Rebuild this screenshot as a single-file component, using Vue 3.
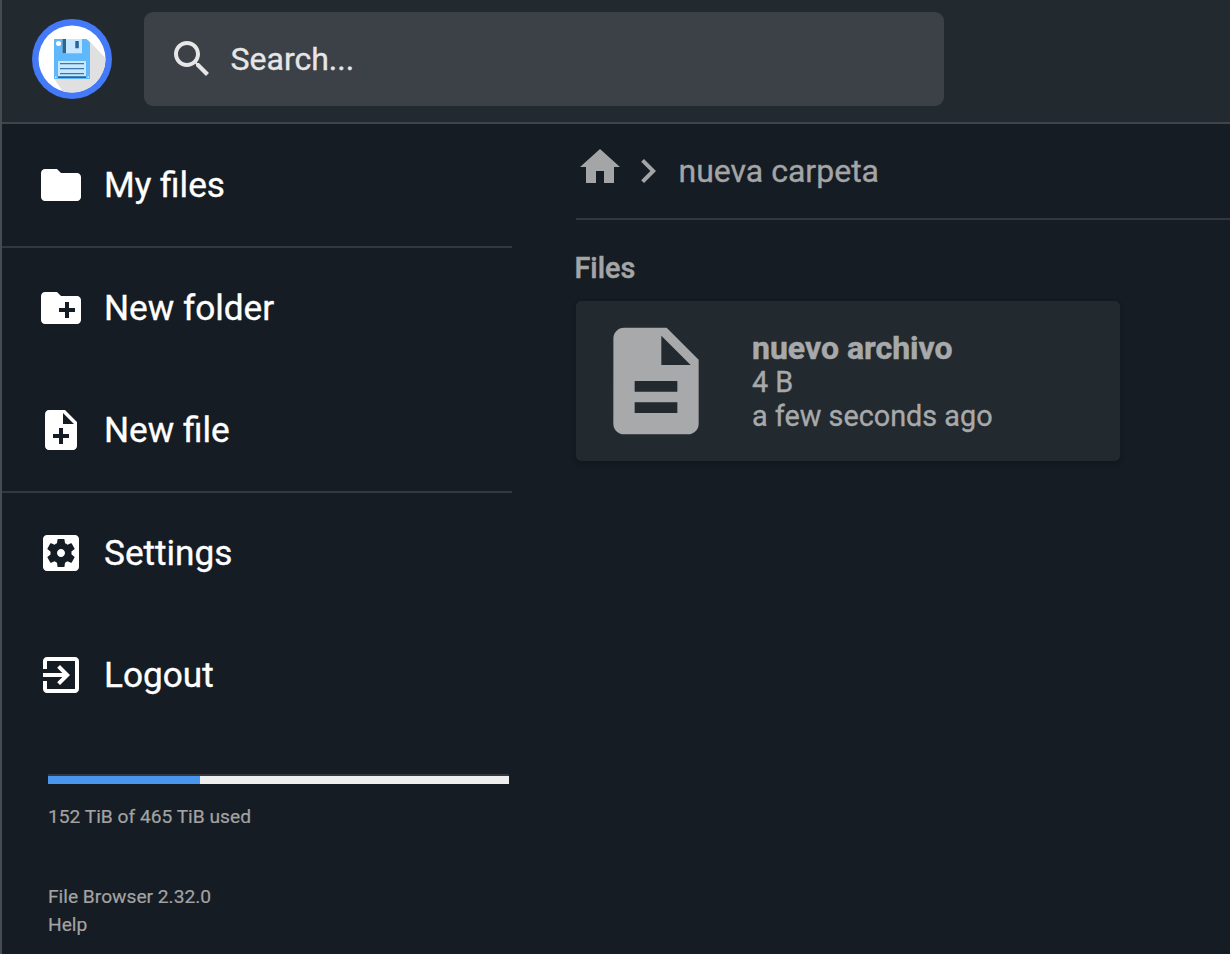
<script setup>
const folder = 'M10 4H4c-1.1 0-1.99.9-1.99 2L2 18c0 1.1.9 2 2 2h16c1.1 0 2-.9 2-2V8c0-1.1-.9-2-2-2h-8l-2-2z'
const groups = [
  [{ label: 'My files', path: folder }],
  [
    { label: 'New folder', path: 'M20 6h-8l-2-2H4c-1.11 0-1.99.89-1.99 2L2 18c0 1.11.89 2 2 2h16c1.11 0 2-.89 2-2V8c0-1.11-.89-2-2-2zm-1 8h-3v3h-2v-3h-3v-2h3V9h2v3h3v2z' },
    { label: 'New file', path: 'M14 2H6c-1.1 0-1.99.9-1.99 2L4 20c0 1.1.89 2 1.99 2H18c1.1 0 2-.9 2-2V8l-6-6zm2 14h-3v3h-2v-3H8v-2h3v-3h2v3h3v2zm-3-7V3.5L18.5 9H13z' },
  ],
  [
    { label: 'Settings', path: 'M12 10c-1.1 0-2 .9-2 2s.9 2 2 2 2-.9 2-2-.9-2-2-2zm7-7H5c-1.11 0-2 .9-2 2v14c0 1.1.89 2 2 2h14c1.11 0 2-.9 2-2V5c0-1.1-.89-2-2-2zm-1.75 9c0 .23-.02.46-.05.68l1.48 1.16c.13.11.17.3.08.45l-1.4 2.42c-.09.15-.27.21-.43.15l-1.74-.7c-.36.28-.76.51-1.18.69l-.26 1.85c-.03.17-.18.3-.35.3h-2.8c-.17 0-.32-.13-.35-.29l-.26-1.85c-.43-.18-.82-.41-1.18-.69l-1.74.7c-.16.06-.34 0-.43-.15l-1.4-2.42c-.09-.15-.05-.34.08-.45l1.48-1.16c-.03-.23-.05-.46-.05-.69s.02-.46.05-.68l-1.48-1.16c-.13-.11-.17-.3-.08-.45l1.4-2.42c.09-.15.27-.21.43-.15l1.74.7c.36-.28.76-.51 1.18-.69l.26-1.85c.03-.17.18-.3.35-.3h2.8c.17 0 .32.13.35.29l.26 1.85c.43.18.82.41 1.18.69l1.74-.7c.16-.06.34 0 .43.15l1.4 2.42c.09.15.05.34-.08.45l-1.48 1.16c.03.23.05.46.05.69z' },
    { label: 'Logout', path: 'M10.09 15.59L11.5 17l5-5-5-5-1.41 1.41L12.67 11H3v2h9.67l-2.58 2.59zM19 3H5c-1.11 0-2 .9-2 2v4h2V5h14v14H5v-4H3v4c0 1.1.89 2 2 2h14c1.1 0 2-.9 2-2V5c0-1.1-.9-2-2-2z' },
  ],
]
</script>

<template>
  <div class="page">
    <header>
      <svg class="logo" viewBox="0 0 80 80">
        <defs><clipPath id="disc"><circle cx="40" cy="40" r="33.5" /></clipPath></defs>
        <circle cx="40" cy="40" r="40" fill="#4479f8" />
        <circle cx="40" cy="40" r="33.5" fill="#fff" />
        <path clip-path="url(#disc)" d="M56 20.5L80 46V80H36L22 59.5z" fill="#e0e0e0" />
        <path d="M22 20H54.5L58 23.5V60H22z" fill="#5fb8fc" />
        <circle cx="26.5" cy="24.5" r="2.5" fill="#fff" />
        <path d="M30.5 20H50V34.3H30.5z" fill="#c6e7fd" />
        <path d="M30.5 20H34V34.3H30.5zM43.3 22H46.8V29.3H43.3z" fill="#2a6596" />
        <path d="M26 42H54V57.5H26z" fill="#c6e7fd" />
        <path d="M28 44H52V45.2H28zM28 49H52V50.2H28zM28 54H52V55.2H28z" fill="#3f78a8" />
        <path d="M26 57.3H54V59H26z" fill="#2a6596" />
        <path d="M23 57.5h1.5V59H23zM55.5 57.5H57V59h-1.5z" fill="#c6e7fd" />
      </svg>
      <div class="search">
        <svg viewBox="0 0 24 24"><path d="M15.5 14h-.79l-.28-.27C15.41 12.59 16 11.11 16 9.5 16 5.91 13.09 3 9.5 3S3 5.91 3 9.5 5.91 16 9.5 16c1.61 0 3.09-.59 4.23-1.57l.27.28v.79l5 4.99L20.49 19l-4.99-5zm-6 0C7.01 14 5 11.99 5 9.5S7.01 5 9.5 5 14 7.01 14 9.5 11.99 14 9.5 14z" /></svg>
        <span>Search...</span>
      </div>
    </header>
    <div class="body">
      <nav>
        <div v-for="(g, i) in groups" :key="i" class="group">
          <div v-for="a in g" :key="a.label" class="action">
            <svg viewBox="0 0 24 24"><path :d="a.path" /></svg>
            <span>{{ a.label }}</span>
          </div>
        </div>
        <div class="usage">
          <div class="bar"><div class="fill"></div></div>
          <p>152 TiB of 465 TiB used</p>
        </div>
        <div class="credits">
          <div>File Browser 2.32.0</div>
          <div>Help</div>
        </div>
      </nav>
      <main>
        <div class="crumbs">
          <svg class="home" viewBox="0 0 24 24"><path d="M10 20v-6h4v6h5v-8h3L12 3 2 12h3v8z" /></svg>
          <svg class="chev" viewBox="0 0 24 24"><path d="M10 6L8.59 7.41 13.17 12l-4.58 4.59L10 18l6-6z" /></svg>
          <span>nueva carpeta</span>
        </div>
        <h2>Files</h2>
        <div class="card">
          <svg viewBox="0 0 24 24"><path d="M14 2H6c-1.1 0-1.99.9-1.99 2L4 20c0 1.1.89 2 1.99 2H18c1.1 0 2-.9 2-2V8l-6-6zm2 16H8v-2h8v2zm0-4H8v-2h8v2zm-3-5V3.5L18.5 9H13z" /></svg>
          <div class="info">
            <strong>nuevo archivo</strong>
            <span>4 B</span>
            <span>a few seconds ago</span>
          </div>
        </div>
      </main>
    </div>
  </div>
</template>

<style>
body { margin: 0; background: #161c23; }
</style>

<style scoped>
* { box-sizing: border-box; }
.page {
  width: 1230px; height: 954px; overflow: hidden;
  display: flex; flex-direction: column;
  background: #161c23; border-left: 2px solid #484b50;
  font-family: Roboto, "Liberation Sans", sans-serif; color: #a3a5a7;
  -webkit-text-stroke: 0.35px currentColor;
}
svg { display: block; flex: none; fill: currentColor; }
header {
  height: 124px; flex: none; display: flex; align-items: flex-start;
  padding: 12px 0 0 30px; background: #22292f; border-bottom: 2px solid #414549;
}
.logo { width: 80px; height: 80px; margin-top: 7px; }
.search {
  width: 800px; height: 94px; margin-left: 32px; padding-left: 24px;
  display: flex; align-items: center; border-radius: 9px;
  background: #3c4047; color: #e6e6e7; font-size: 32px;
}
.search svg { width: 48px; height: 48px; margin-top: -1px; }
.search span { margin-left: 14.5px; }
.body { flex: 1; display: flex; }
nav { width: 510px; flex: none; color: #fff; }
.group + .group { border-top: 2px solid #34383e; height: 245px; }
.action {
  height: 122px; display: flex; align-items: center;
  padding-left: 34.8px; font-size: 35.2px;
}
.group + .group .action:first-child { height: 120px; }
.group + .group .action:last-child { height: 124px; }
.action svg { width: 48px; height: 48px; }
.action span { margin-left: 19.2px; }
.usage { padding: 38px 3px 0 46px; color: #a3a3a3; font-size: 19.2px; -webkit-text-stroke-width: 0.2px; }
.bar { height: 10px; border-top: 2px solid #34383e; background: #eee; }
.fill { width: 33%; height: 8px; background: #4896ee; }
.usage p { margin: 20.5px 0 0; line-height: 24px; }
.credits { padding: 54px 0 0 46px; color: #a3a3a3; font-size: 19.2px; line-height: 28px; -webkit-text-stroke-width: 0.2px; }
main { flex: 1; padding-left: 64px; }
.crumbs {
  height: 96px; display: flex; align-items: center;
  border-bottom: 2px solid #34383e; font-size: 32px;
}
.home { width: 48px; height: 48px; margin-top: -8px; }
.chev { width: 48px; height: 48px; }
.crumbs span { margin-left: 6.5px; }
h2 { margin: 31px 0 16px -1.5px; font-size: 28.8px; line-height: 34px; font-weight: 500; -webkit-text-stroke-width: 0.5px; }
.card {
  width: 544px; height: 160px; padding: 16px; display: flex; align-items: center;
  border-radius: 5px; background: #22292f; color: #a8a9ab;
  box-shadow: 0 2px 6px rgba(0, 0, 0, .06), 0 2px 4px rgba(0, 0, 0, .12);
}
.card svg { width: 128px; height: 128px; }
.info { margin: 2px 0 0 32px; display: flex; flex-direction: column; font-size: 28.8px; line-height: 34px; }
.info strong { font-size: 32px; font-weight: 700; -webkit-text-stroke-width: 0.5px; }
</style>
